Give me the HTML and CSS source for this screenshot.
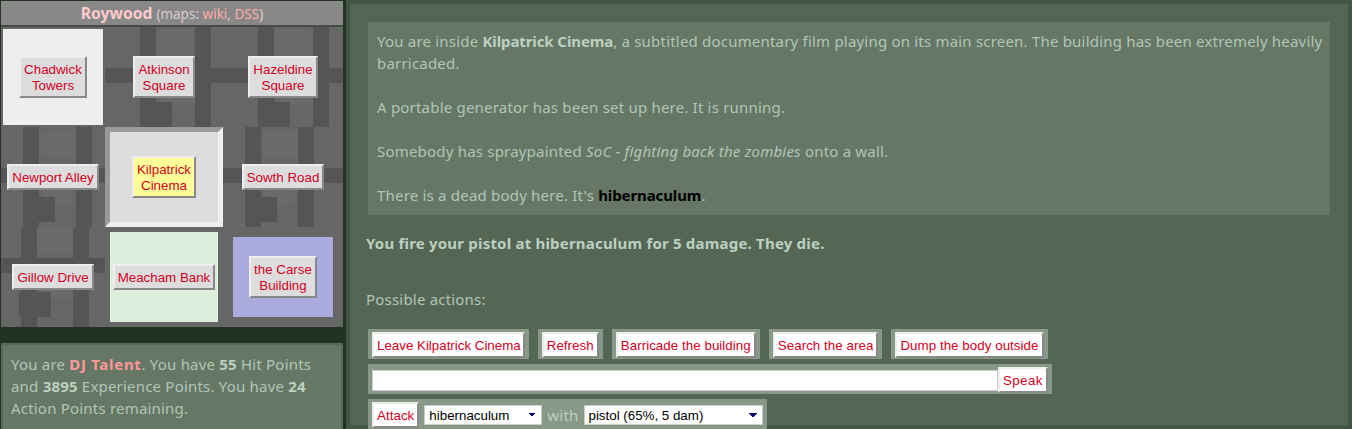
FILE: index.html
```html
<!DOCTYPE html>
<html lang="en">
<head>
  <meta charset="UTF-8" />
  <title>Urban Dead</title>
  <link rel="stylesheet" href="styles.css">
</head>
<body>
  <div class="page">
    <div class="side">
      <div class="mapbox">
        <div class="maphead"><span class="suburb">Roywood</span> <span class="small">(maps: <a>wiki</a>, <a>DSS</a>)</span></div>
        <div class="grid">
          <div class="cell c-white"><button class="loc">Chadwick<br>Towers</button></div>
          <div class="cell c-tex"><button class="loc">Atkinson<br>Square</button></div>
          <div class="cell c-tex"><button class="loc">Hazeldine<br>Square</button></div>
          <div class="cell c-tex t2"><button class="loc">Newport Alley</button></div>
          <div class="cell c-here"><button class="loc yellow">Kilpatrick<br>Cinema</button></div>
          <div class="cell c-tex t2"><button class="loc">Sowth Road</button></div>
          <div class="cell c-tex t3"><button class="loc">Gillow Drive</button></div>
          <div class="cell"><div class="lot c-green"><button class="loc">Meacham Bank</button></div></div>
          <div class="cell"><div class="lot c-blue"><button class="loc">the Carse<br>Building</button></div></div>
        </div>
      </div>
      <div class="stats">You are <b class="me">DJ Talent</b>. You have <b>55</b> Hit Points<br>and <b>3895</b> Experience Points. You have <b>24</b><br>Action Points remaining.</div>
    </div>
    <div class="main">
      <div class="desc">
        <p>You are inside <b>Kilpatrick Cinema</b>, a subtitled documentary film playing on its main screen. The building has been extremely heavily<br>barricaded.</p>
        <p>A portable generator has been set up here. It is running.</p>
        <p>Somebody has spraypainted <i>SoC - fighting back the zombies</i> onto a wall.</p>
        <p>There is a dead body here. It's <b class="dead">hibernaculum</b>.</p>
      </div>
      <p class="result">You fire your pistol at hibernaculum for 5 damage. They die.</p>
      <p class="possible">Possible actions:</p>
      <div class="actions">
        <div class="frm"><button class="act leave">Leave Kilpatrick Cinema</button></div>
        <div class="frm"><button class="act">Refresh</button></div>
        <div class="frm"><button class="act">Barricade the building</button></div>
        <div class="frm"><button class="act">Search the area</button></div>
        <div class="frm"><button class="act">Dump the body outside</button></div>
      </div>
      <div class="actions">
        <div class="frm"><input class="say" type="text"><button class="act speak">Speak</button></div>
      </div>
      <div class="actions">
        <div class="frm"><button class="act">Attack</button><select class="sel sel-who"><option>hibernaculum</option></select><span class="with">with</span><select class="sel sel-gun"><option>pistol (65%, 5 dam)</option></select></div>
      </div>
    </div>
  </div>
</body>
</html>
```
FILE: styles.css
```css
html, body {
  margin: 0;
  height: 429px;
  overflow: hidden;
}
body {
  background-color: #223322;
  font-family: "Noto Sans", sans-serif;
  font-size: 15px;
  letter-spacing: 0.2px;
  color: #b0c6b6;
}
.page {
  display: flex;
  height: 429px;
  overflow: hidden;
}
.side {
  width: 342px;
  margin-left: 1px;
  margin-top: 1px;
  flex-shrink: 0;
}
.mapbox {
  background-color: #666666;
}
.maphead {
  height: 24px;
  line-height: 24px;
  text-align: center;
  background-color: #888888;
  border-bottom: 2px solid #444c44;
  color: #ffcccc;
  letter-spacing: 0;
}
.suburb {
  font-weight: bold;
  font-size: 15.7px;
}
.small {
  font-size: 13.5px;
  color: #ddcccc;
}
.small a {
  color: #ffaaaa;
}
.grid {
  display: grid;
  grid-template-columns: 104px 118px 120px;
  grid-template-rows: 100px 100px 100px;
}
.cell {
  display: flex;
  align-items: center;
  justify-content: center;
}
/* street block texture */
.c-tex {
  background-color: #666666;
  background-image:
    linear-gradient(#555555, #555555),
    linear-gradient(#555555, #555555),
    linear-gradient(#555555, #555555),
    linear-gradient(#555555, #555555),
    linear-gradient(#555555, #555555),
    linear-gradient(#6a6a6a, #6a6a6a),
    linear-gradient(#6a6a6a, #6a6a6a);
  background-size: 16px 100%, 16px 100%, 100% 15px, 32px 25px, 16px 20px, 36px 26px, 30px 22px;
  background-position: 35px 0, 90px 0, 0 41px, 35px 75px, 90px 80px, 52px 2px, 60px 56px;
  background-repeat: no-repeat;
}
.t2 {
  background-position: 22px 0, 75px 0, 0 41px, 22px 70px, 75px 78px, 40px 4px, 42px 56px;
}
.t3 {
  background-position: 20px 0, 72px 0, 0 31px, 18px 65px, 72px 60px, 36px 0, 40px 50px;
}
.c-white {
  background-color: #eeeeee;
  border: 2px solid #666666;
  box-sizing: border-box;
}
.c-here {
  background-color: #dddddd;
  border: 5px solid;
  border-color: #999999 #eeeeee #eeeeee #999999;
  box-sizing: border-box;
}
.lot {
  display: flex;
  align-items: center;
  justify-content: center;
}
.c-green {
  background-color: #ddeedd;
  width: 108px;
  height: 90px;
}
.c-blue {
  background-color: #aaaadd;
  width: 100px;
  height: 80px;
}
.loc, .act {
  font-family: "Liberation Sans", Arial, sans-serif;
  font-size: 13.33px;
  line-height: 16px;
  color: #d40024;
  border: 2px solid;
  border-color: #eeeeee #888888 #888888 #eeeeee;
  white-space: nowrap;
}
.loc {
  letter-spacing: 0;
  padding: 4px 3px 2px;
  background-color: #dddddd;
}
.loc.yellow {
  background-color: #ffff99;
}
.stats {
  margin-top: 16px;
  padding: 8px 8px;
  height: 90px;
  box-sizing: border-box;
  background-color: #667766;
  border: 2px solid #5a6a5a;
  line-height: 22px;
}
.stats b, .desc b {
  color: #bbd0c0;
}
.stats .me {
  color: #ff9999;
  letter-spacing: 0.7px;
}
.main {
  flex: 1;
  margin-left: 3px;
  background-color: #556655;
  border: 4px solid #445544;
  padding: 18px 18px 0;
  min-width: 0;
}
.desc {
  background-color: #667766;
  padding: 8px 6px 9px 9px;
  line-height: 22px;
}
.desc p {
  margin: 0 0 22px;
}
.desc p:last-child {
  margin-bottom: 0;
}
.desc b {
  letter-spacing: -0.1px;
}
.desc .dead {
  color: #000000;
}
.result {
  margin: 17px 0 0 -2px;
  line-height: 22px;
  font-weight: bold;
  color: #bbd0c0;
}
.possible {
  margin: 34px 0 0 -2px;
  line-height: 22px;
}
.possible + .actions {
  margin-top: 19px;
}
.actions {
  display: flex;
  gap: 9px;
  margin-top: 5px;
}
.frm {
  display: flex;
  align-items: center;
  height: 30px;
  box-sizing: border-box;
  background-color: #889988;
  padding: 3px 4px 1px 4px;
}
.act {
  background-color: #ffffff;
  height: 26px;
  padding: 1px 3px 0;
  letter-spacing: 0.05px;
}
.act.leave {
  letter-spacing: 0;
  padding-right: 2px;
}
.act.speak {
  letter-spacing: 0.4px;
}
.say {
  width: 626px;
  height: 21px;
  padding: 0;
  border: 1px solid #cccccc;
  background-color: #ffffff;
  box-sizing: border-box;
}
.sel {
  appearance: none;
  font-family: "Liberation Sans", Arial, sans-serif;
  font-size: 13.33px;
  letter-spacing: 0;
  height: 20px;
  color: #000000;
  background-color: #ffffff;
  background-image:
    linear-gradient(45deg, transparent 50%, #000066 50%),
    linear-gradient(-45deg, transparent 50%, #000066 50%);
  background-size: 4px 4px, 4px 4px;
  background-position: right 9px center, right 5px center;
  background-repeat: no-repeat;
  border: 1px solid #cccccc;
  margin-left: 5px;
  padding: 0 0 0 4px;
}
.sel-who {
  width: 118px;
}
.sel-gun {
  width: 179px;
}
.with {
  margin-left: 5px;
  color: #bbd0c0;
}
```
